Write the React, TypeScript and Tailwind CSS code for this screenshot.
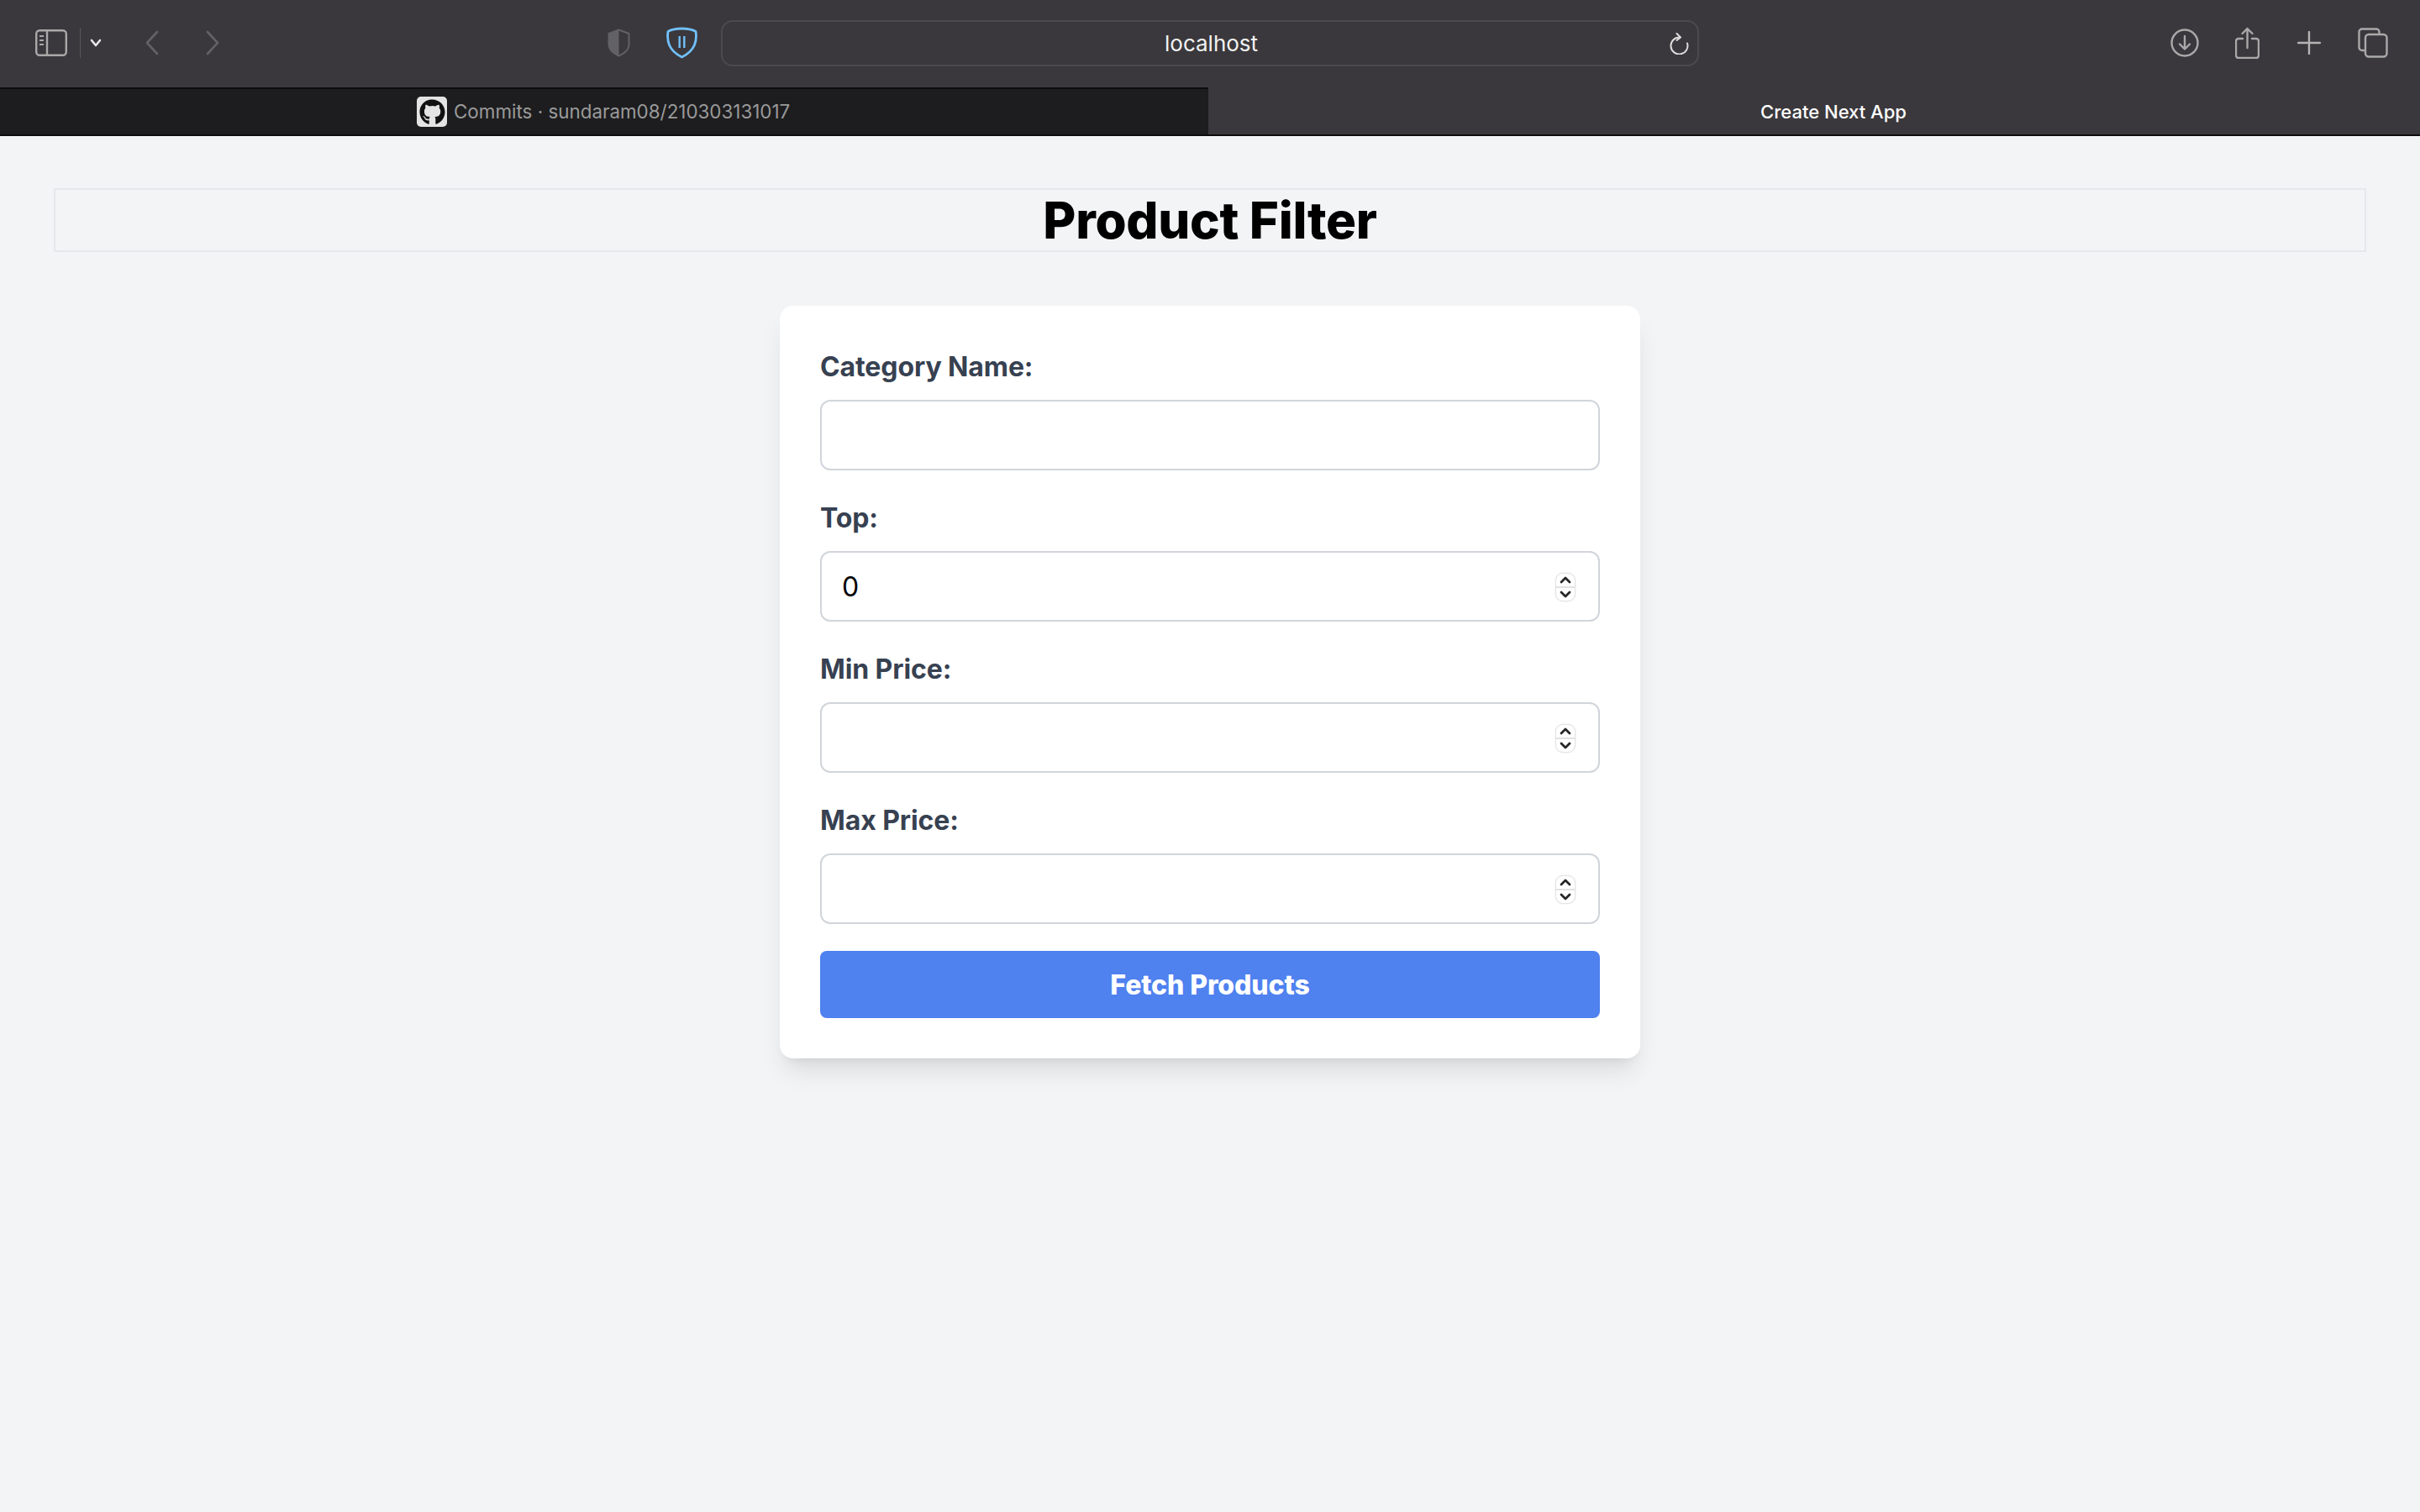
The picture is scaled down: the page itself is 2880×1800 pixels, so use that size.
import { FaGithub } from 'react-icons/fa';

const fields = [
  { label: 'Category Name:', type: 'text', value: '' },
  { label: 'Top:', type: 'number', value: '0' },
  { label: 'Min Price:', type: 'number', value: '' },
  { label: 'Max Price:', type: 'number', value: '' },
];

const Spinner = () => (
  <div className="absolute top-[26px] right-[29px] flex h-[34px] w-[24px] flex-col overflow-hidden rounded-[9px] border border-[#e4e4e4] bg-white shadow-[0_0_2px_rgba(0,0,0,0.12)]">
    <div className="flex flex-1 items-center justify-center border-b-2 border-[#e2e2e2]">
      <svg width="14" height="9" viewBox="0 0 14 9" fill="none" stroke="#262626" strokeWidth="2.8" strokeLinecap="round" strokeLinejoin="round">
        <path d="M2 7l5-5 5 5" />
      </svg>
    </div>
    <div className="flex flex-1 items-center justify-center">
      <svg width="14" height="9" viewBox="0 0 14 9" fill="none" stroke="#262626" strokeWidth="2.8" strokeLinecap="round" strokeLinejoin="round">
        <path d="M2 2l5 5 5-5" />
      </svg>
    </div>
  </div>
);

const Toolbar = () => (
  <div className="flex h-[104px] items-center bg-[#3a383c] pl-[42px]">
    <svg className="mb-[2px]" width="38" height="32" viewBox="0 0 38 32" fill="none" stroke="#a9a9a9" strokeWidth="2.4">
      <rect x="1.2" y="1.2" width="35.6" height="29.6" rx="4" />
      <path d="M14 1.5v29" />
      <path d="M5 8h5M5 13h5M5 18h5" strokeWidth="2" />
    </svg>
    <div className="mb-[2px] ml-[15px] h-[36px] w-px bg-[#57565a]" />
    <svg className="mb-[2px] ml-[11px]" width="14" height="10" viewBox="0 0 14 10" fill="none" stroke="#e8e8e8" strokeWidth="2.6" strokeLinecap="round" strokeLinejoin="round">
      <path d="M2 2l5 6 5-6" />
    </svg>
    <svg className="mb-[2px] ml-[52px]" width="16" height="30" viewBox="0 0 16 30" fill="none" stroke="#626165" strokeWidth="2.6" strokeLinecap="round" strokeLinejoin="round">
      <path d="M14 2L2 15l12 13" />
    </svg>
    <svg className="mb-[2px] ml-[55px]" width="18" height="30" viewBox="0 0 18 30" fill="none" stroke="#626165" strokeWidth="2.6" strokeLinecap="round" strokeLinejoin="round">
      <path d="M3 2l12 13L3 28" />
    </svg>
    <svg className="mb-[2px] ml-[461px]" width="27" height="34" viewBox="0 0 27 34" fill="none">
      <path d="M13.5 1.5L25.5 6v13c0 6-5 10.500-12 13.500C6.500 29.500 1.500 25 1.500 19V6z" stroke="#626165" strokeWidth="2" strokeLinejoin="round" />
      <path d="M13.500 1.500L1.500 6v13c0 6 5 10.500 12 13.500z" fill="#626165" />
    </svg>
    <svg className="mb-[2px] ml-[43px]" width="37" height="38" viewBox="0 0 37 38" fill="none" stroke="#71c0fb" strokeWidth="2.800" strokeLinejoin="round">
      <path d="M18.500 2c6.500 0 12 1 16.500 3.500.8 5 .5 11-1.500 16-2.500 6-8 11-15 14.500C11.500 32.500 6 27.500 3.500 21.500 1.500 16.500 1.200 10.500 2 5.500 6.500 3 12 2 18.500 2z" />
      <path d="M15.700 11v14M21.300 11v14" strokeWidth="2.400" />
    </svg>
    <div className="mb-[1px] ml-[28px] flex h-[55px] w-[1164px] items-center justify-between rounded-[14px] border-2 border-[#4b4a4e] pl-[526px] pr-[10px]">
      <span className="font-['Inter',sans-serif] text-[26px] text-[#f2f2f2]">localhost</span>
      <svg width="24" height="26" viewBox="0 0 24 26" fill="none" stroke="#dcdcdc" strokeWidth="2" strokeLinecap="round" strokeLinejoin="round">
        <path d="M13 5.500a10 10 0 1 0 9 7" />
        <path d="M9.500 1l4.500 4.500-4.500 3.500" />
      </svg>
    </div>
    <svg className="mb-[2px] ml-[561px]" width="34" height="34" viewBox="0 0 34 34" fill="none" stroke="#a9a9a9" strokeWidth="2.400" strokeLinecap="round" strokeLinejoin="round">
      <circle cx="17" cy="17" r="15.500" />
      <path d="M17 9v15M11 18.500l6 6 6-6" />
    </svg>
    <svg className="mb-[2px] ml-[43px]" width="29" height="38" viewBox="0 0 29 38" fill="none" stroke="#a9a9a9" strokeWidth="2.400" strokeLinecap="round" strokeLinejoin="round">
      <path d="M9 14H4a3 3 0 0 0-3 3v17a3 3 0 0 0 3 3h21a3 3 0 0 0 3-3V17a3 3 0 0 0-3-3h-5" />
      <path d="M14.500 25V2M8.500 8l6-6 6 6" />
    </svg>
    <svg className="mb-[2px] ml-[45px]" width="28" height="28" viewBox="0 0 28 28" fill="none" stroke="#b4b4b4" strokeWidth="2.400" strokeLinecap="round">
      <path d="M14 1v26M1 14h26" />
    </svg>
    <svg className="mb-[2px] ml-[44px]" width="36" height="36" viewBox="0 0 36 36" fill="none" stroke="#a9a9a9" strokeWidth="2.400" strokeLinejoin="round">
      <path d="M8 27H5a3.500 3.500 0 0 1-3.500-3.500V5A3.500 3.500 0 0 1 5 1.500h17A3.500 3.500 0 0 1 25.500 5v3" />
      <rect x="9" y="8" width="25.500" height="26.500" rx="4" />
    </svg>
  </div>
);

const TabBar = () => (
  <div className="flex h-[58px] border-b-2 border-[#0c0c0d] font-['Inter',sans-serif] text-[22px]">
    <div className="flex w-[1438px] items-center gap-[8px] border-t-2 border-[#0c0c0d] bg-[#1d1d1f] pl-[496px]">
      <div className="flex h-[36px] w-[36px] items-center justify-center rounded-[5px] bg-[#e4e4e4]">
        <FaGithub className="text-[31px] text-[#111111]" />
      </div>
      <span className="text-[22.4px] text-[#9a9a9a]">Commits · sundaram08/210303131017</span>
    </div>
    <div className="flex flex-1 items-center justify-center bg-[#3a383c] pl-[46px] pt-[2px] font-medium text-white">
      Create Next App
    </div>
  </div>
);

export default function App() {
  return (
    <div className="flex min-h-screen flex-col bg-[#f3f4f6] font-['Inter',sans-serif]">
      <Toolbar />
      <TabBar />
      <div className="flex flex-col items-center px-16 pt-[62px]">
        <h1 className="w-full border-2 border-[#e5e7eb] text-center text-[60px] leading-[72px] font-extrabold tracking-[-0.3px] text-black">
          Product Filter
        </h1>
        <div className="mt-[64px] w-[1024px] rounded-2xl bg-white p-12 shadow-[0_20px_30px_-6px_rgba(0,0,0,0.1),0_8px_12px_-8px_rgba(0,0,0,0.1)]">
          <div className="flex flex-col gap-8">
            {fields.map((field) => (
              <div key={field.label}>
                <label className="mb-[14px] block text-[32px] leading-[50px] font-bold tracking-[-0.1px] text-[#374151]">
                  {field.label}
                </label>
                <div className="relative">
                  <input
                    type="text"
                    readOnly
                    value={field.value}
                    className="block h-[84px] w-full rounded-xl border-2 border-[#d1d5db] bg-white px-[24px] font-['Inter',sans-serif] text-[32px] text-black"
                  />
                  {field.type === 'number' && <Spinner />}
                </div>
              </div>
            ))}
            <button className="h-[80px] w-full rounded-lg bg-[#4f81ef] pt-[2px] text-[32px] font-extrabold tracking-[-0.1px] text-white">
              Fetch Products
            </button>
          </div>
        </div>
      </div>
    </div>
  );
}
